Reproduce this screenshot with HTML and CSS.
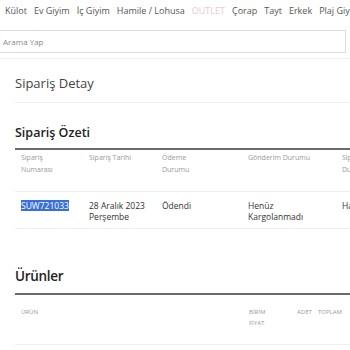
FILE: index.html
```html
<!DOCTYPE html>
<html lang="tr">
<head>
    <meta charset="UTF-8">
    <meta name="viewport" content="width=device-width, initial-scale=1.0">
    <title>Sipariş Detay</title>
    <link rel="stylesheet" href="styles.css">
</head>
<body>

    <nav class="menu">
        <a href="#">Külot</a>
        <a href="#">Ev Giyim</a>
        <a href="#">İç Giyim</a>
        <a href="#">Hamile / Lohusa</a>
        <a href="#" class="outlet">OUTLET</a>
        <a href="#">Çorap</a>
        <a href="#">Tayt</a>
        <a href="#">Erkek</a>
        <a href="#">Plaj Giyim</a>
    </nav>

    <div class="search">
        <input type="text" placeholder="Arama Yap">
    </div>
    <div class="divider"></div>

    <div class="page">
        <h1 class="page-title">Sipariş Detay</h1>

        <h2 class="section-title">Sipariş Özeti</h2>
        <div class="summary">
            <div class="row head">
                <div>Sipariş<br>Numarası</div>
                <div>Sipariş Tarihi</div>
                <div>Ödeme<br>Durumu</div>
                <div>Gönderim Durumu</div>
                <div>Sipariş<br>Durumu</div>
            </div>
            <div class="row body">
                <div><span class="selected">SUW721033</span></div>
                <div>28 Aralık 2023<br>Perşembe</div>
                <div>Ödendi</div>
                <div>Henüz<br>Kargolanmadı</div>
                <div>Hazırlanıyor</div>
            </div>
        </div>

        <h2 class="section-title big">Ürünler</h2>
        <div class="products">
            <div class="row head">
                <div>ÜRÜN</div>
                <div>BİRİM<br>FİYAT</div>
                <div>ADET</div>
                <div>TOPLAM</div>
            </div>
        </div>
    </div>

</body>
</html>
```

FILE: styles.css
```css
body {
    margin: 0;
    overflow: hidden;
    background: #fff;
    font-family: "Open Sans", sans-serif;
    color: #333;
}

.menu {
    display: flex;
    gap: 7px;
    height: 20px;
    align-items: center;
    padding-left: 5px;
    white-space: nowrap;
    overflow: hidden;
}

.menu a {
    font-size: 9px;
    color: #555;
    text-decoration: none;
}

.menu .outlet {
    color: #ecc9d1;
}

.search {
    margin-top: 8px;
    margin-left: -2px;
}

.search input {
    box-sizing: border-box;
    width: 348px;
    height: 23px;
    border: 1px solid #ddd;
    padding: 0 4px;
    font-family: inherit;
    font-size: 8px;
    outline: none;
}

.search input::placeholder {
    color: #888;
}

.divider {
    height: 1px;
    margin-top: 5px;
    background: #f0f0f0;
}

.page {
    width: 420px;
    padding-left: 15px;
}

.page-title {
    margin: 14px 0 0;
    padding-bottom: 9px;
    border-bottom: 1px solid #efefef;
    font-size: 13px;
    line-height: 20px;
    font-weight: 400;
    color: #444;
}

.section-title {
    margin: 20px 0 0;
    padding-bottom: 5px;
    border-bottom: 2px solid #6b6b6b;
    font-size: 12.5px;
    line-height: 20px;
    font-weight: 600;
    color: #222;
}

.section-title.big {
    margin-top: 36px;
    padding-bottom: 6px;
    font-size: 13.5px;
    line-height: 22px;
    letter-spacing: -0.3px;
}

.row {
    display: grid;
    border-bottom: 1px solid #eee;
}

.row > div {
    padding-left: 6px;
}

.summary .row {
    grid-template-columns: 68px 73px 86px 94px 80px;
}

.head {
    font-size: 7px;
    color: #999;
}

.summary .head {
    padding: 2px 0 15px;
    line-height: 12px;
}

.summary .body {
    padding: 8px 0 6px;
    font-size: 8.5px;
    line-height: 11px;
    color: #333;
}

.selected {
    background: #3a6fd8;
    color: #fff;
}

.products .row {
    grid-template-columns: 228px 48px 21px 80px;
}

.products .head {
    padding: 12px 0 15px;
    font-size: 6px;
    line-height: 11px;
}
```
